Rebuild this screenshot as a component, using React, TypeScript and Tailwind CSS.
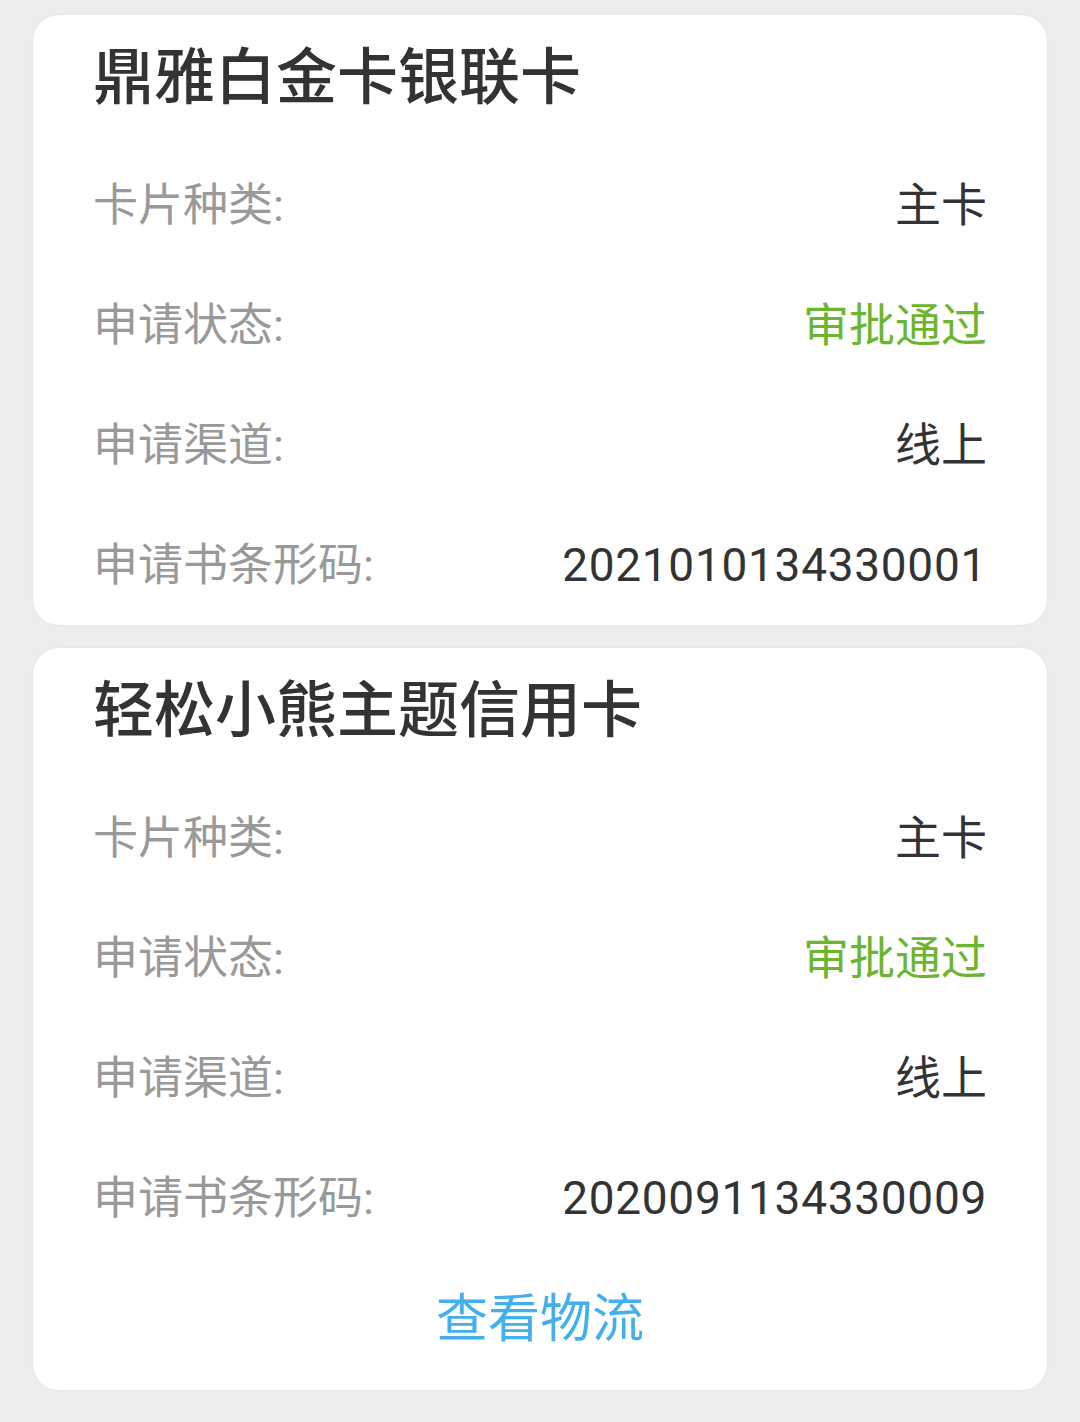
import React from "react";

const FONT = { fontFamily: "Roboto, 'Noto Sans CJK SC', sans-serif" };

type Row = { label: string; value: string; tone?: "green" | "dark" | "num" };

function Card({ title, rows, link }: { title: string; rows: Row[]; link?: string }) {
  return (
    <div className="mx-[33px] rounded-[26px] bg-white px-[60px] shadow-[0_0_2px_rgba(0,0,0,0.08)]">
      <div className="flex h-[130px] items-center pb-[4px]">
        <div className="text-[61px] font-medium leading-none text-[#333333]">{title}</div>
      </div>
      {rows.map((r) => (
        <div key={r.label} className="flex h-[120px] items-center justify-between">
          <span className="text-[45px] leading-none text-[#999999]">{r.label}</span>
          <span
            className={
              r.tone === "green"
                ? "text-[46px] leading-none text-[#6bb52f]"
                : r.tone === "num"
                ? "text-[46px] leading-none tracking-[0.7px] text-[#333333]"
                : "text-[46px] leading-none text-[#333333]"
            }
          >
            {r.value}
          </span>
        </div>
      ))}
      {link && (
        <div className="flex h-[132px] items-center justify-center pb-[8px]">
          <span className="text-[52px] leading-none text-[#42b0ec]">{link}</span>
        </div>
      )}
    </div>
  );
}

export default function App() {
  return (
    <div className="min-h-[1422px] w-[1080px] bg-[#ebedef] pt-[15px]" style={FONT}>
      <Card
        title="鼎雅白金卡银联卡"
        rows={[
          { label: "卡片种类:", value: "主卡" },
          { label: "申请状态:", value: "审批通过", tone: "green" },
          { label: "申请渠道:", value: "线上" },
          { label: "申请书条形码:", value: "2021010134330001", tone: "num" },
        ]}
      />
      <div className="h-[23px]" />
      <Card
        title="轻松小熊主题信用卡"
        rows={[
          { label: "卡片种类:", value: "主卡" },
          { label: "申请状态:", value: "审批通过", tone: "green" },
          { label: "申请渠道:", value: "线上" },
          { label: "申请书条形码:", value: "2020091134330009", tone: "num" },
        ]}
        link="查看物流"
      />
    </div>
  );
}
